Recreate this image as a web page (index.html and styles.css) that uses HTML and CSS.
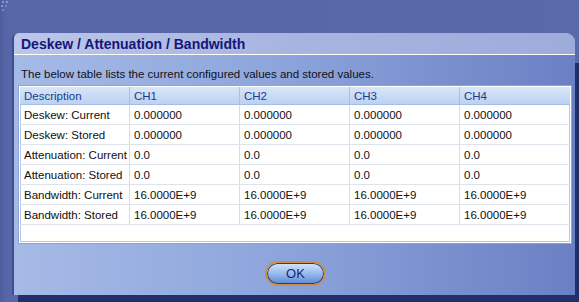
FILE: index.html
```html
<!DOCTYPE html>
<html>
<head>
    <title>Deskew / Attenuation / Bandwidth</title>
    <link rel="stylesheet" href="styles.css">
</head>
<body>
    <svg class="corner-grip" width="12" height="12" viewBox="0 0 12 12">
        <rect x="2" y="1" width="2" height="2" fill="#8d9ac6"/>
        <rect x="6" y="1" width="2" height="2" fill="#8d9ac6"/>
        <rect x="1" y="5" width="2" height="2" fill="#8d9ac6"/>
        <rect x="5" y="5" width="2" height="2" fill="#7886bc"/>
        <rect x="2" y="9" width="2" height="2" fill="#7886bc"/>
    </svg>
    <div class="dialog">
        <div class="title-bar">Deskew / Attenuation / Bandwidth</div>
        <div class="dialog-body">
            <p class="intro">The below table lists the current configured values and stored values.</p>
            <div class="table-frame">
                <table class="values">
                    <thead>
                        <tr>
                            <th>Description</th>
                            <th>CH1</th>
                            <th>CH2</th>
                            <th>CH3</th>
                            <th>CH4</th>
                        </tr>
                    </thead>
                    <tbody>
                        <tr><td>Deskew: Current</td><td>0.000000</td><td>0.000000</td><td>0.000000</td><td>0.000000</td></tr>
                        <tr><td>Deskew: Stored</td><td>0.000000</td><td>0.000000</td><td>0.000000</td><td>0.000000</td></tr>
                        <tr><td>Attenuation: Current</td><td>0.0</td><td>0.0</td><td>0.0</td><td>0.0</td></tr>
                        <tr><td>Attenuation: Stored</td><td>0.0</td><td>0.0</td><td>0.0</td><td>0.0</td></tr>
                        <tr><td>Bandwidth: Current</td><td>16.0000E+9</td><td>16.0000E+9</td><td>16.0000E+9</td><td>16.0000E+9</td></tr>
                        <tr><td>Bandwidth: Stored</td><td>16.0000E+9</td><td>16.0000E+9</td><td>16.0000E+9</td><td>16.0000E+9</td></tr>
                    </tbody>
                </table>
            </div>
            <div class="actions">
                <button class="ok-button">OK</button>
            </div>
        </div>
    </div>
</body>
</html>
```

FILE: styles.css
```css
body {
    margin: 0;
    width: 579px;
    height: 302px;
    overflow: hidden;
    background: linear-gradient(to right, #4c5c9c 0, #5666a6 6px, #5a6aa8 100%);
    font-family: "Liberation Sans", Arial, sans-serif;
    position: relative;
}
.corner-grip {
    position: absolute;
    left: 0;
    top: 0;
}
.dialog {
    position: relative;
    margin: 33px 0 0 12px;
    width: 561px;
    height: 262px;
    border-left: 2px solid #3e4e92;
    border-radius: 6px 9px 0 0;
    background: linear-gradient(to right, #a6bae6 0, #8ea6dc 45%, #6a80c4 100%);
    display: flex;
    flex-direction: column;
}
.dialog::after {
    content: "";
    position: absolute;
    left: 4px;
    top: 30px;
    right: -4px;
    bottom: -7px;
    z-index: -1;
    background-color: #3a4a8a;
    background-image: radial-gradient(circle, #202e6a 0.8px, transparent 1px);
    background-size: 2px 2px;
}
.title-bar {
    height: 21px;
    line-height: 22px;
    padding-left: 7px;
    border-bottom: 1px solid #ffffff;
    border-radius: 6px 9px 0 0;
    background: linear-gradient(to right, #bcc6e8 0, #a8b4e0 50%, #9eacdc 100%);
    color: #14167a;
    font-size: 14px;
    font-weight: bold;
}
.dialog-body {
    flex: 1;
    display: flex;
    flex-direction: column;
}
.intro {
    margin: 12px 0 5px 7px;
    font-size: 11.5px;
    line-height: 14px;
    color: #101020;
}
.table-frame {
    margin-left: 5px;
    width: 550px;
    height: 155px;
    background: #ffffff;
    border: 1px solid #ffffff;
    box-shadow: 0 0 0 1px #8ea2d6, inset 0 0 0 1px #b4c6ea;
}
.values {
    border-collapse: collapse;
    width: 100%;
    font-size: 11.5px;
    color: #101010;
}
.values th,
.values td {
    text-align: left;
    padding: 0 0 0 4px;
    border-right: 1px solid #d6dcea;
    white-space: nowrap;
}
.values th:last-child,
.values td:last-child {
    border-right: none;
}
.values th {
    height: 17px;
    font-weight: normal;
    color: #1c3a8e;
    background: linear-gradient(to bottom, #d8e6f8, #bcd2f2);
    border-bottom: 1px solid #a6bce4;
    border-right-color: #a8bee6;
}
.values td {
    height: 19px;
    border-bottom: 1px solid #dfe3ec;
}
.values th:first-child,
.values td:first-child {
    width: 105px;
}
.values th:nth-child(2),
.values th:nth-child(3),
.values th:nth-child(4) {
    width: 105px;
}
.actions {
    display: flex;
    justify-content: center;
    padding: 18px 0 0 2px;
}
.ok-button {
    width: 61px;
    height: 25px;
    border-radius: 13px;
    border: 2px solid #c8904c;
    box-shadow: inset 0 0 0 1px #2c3a78;
    background: linear-gradient(to bottom, #d6e6fc 0, #9cc0f0 45%, #5e88d4 100%);
    color: #1a2470;
    font-family: "Liberation Sans", Arial, sans-serif;
    font-size: 13px;
    padding: 0;
}
```
